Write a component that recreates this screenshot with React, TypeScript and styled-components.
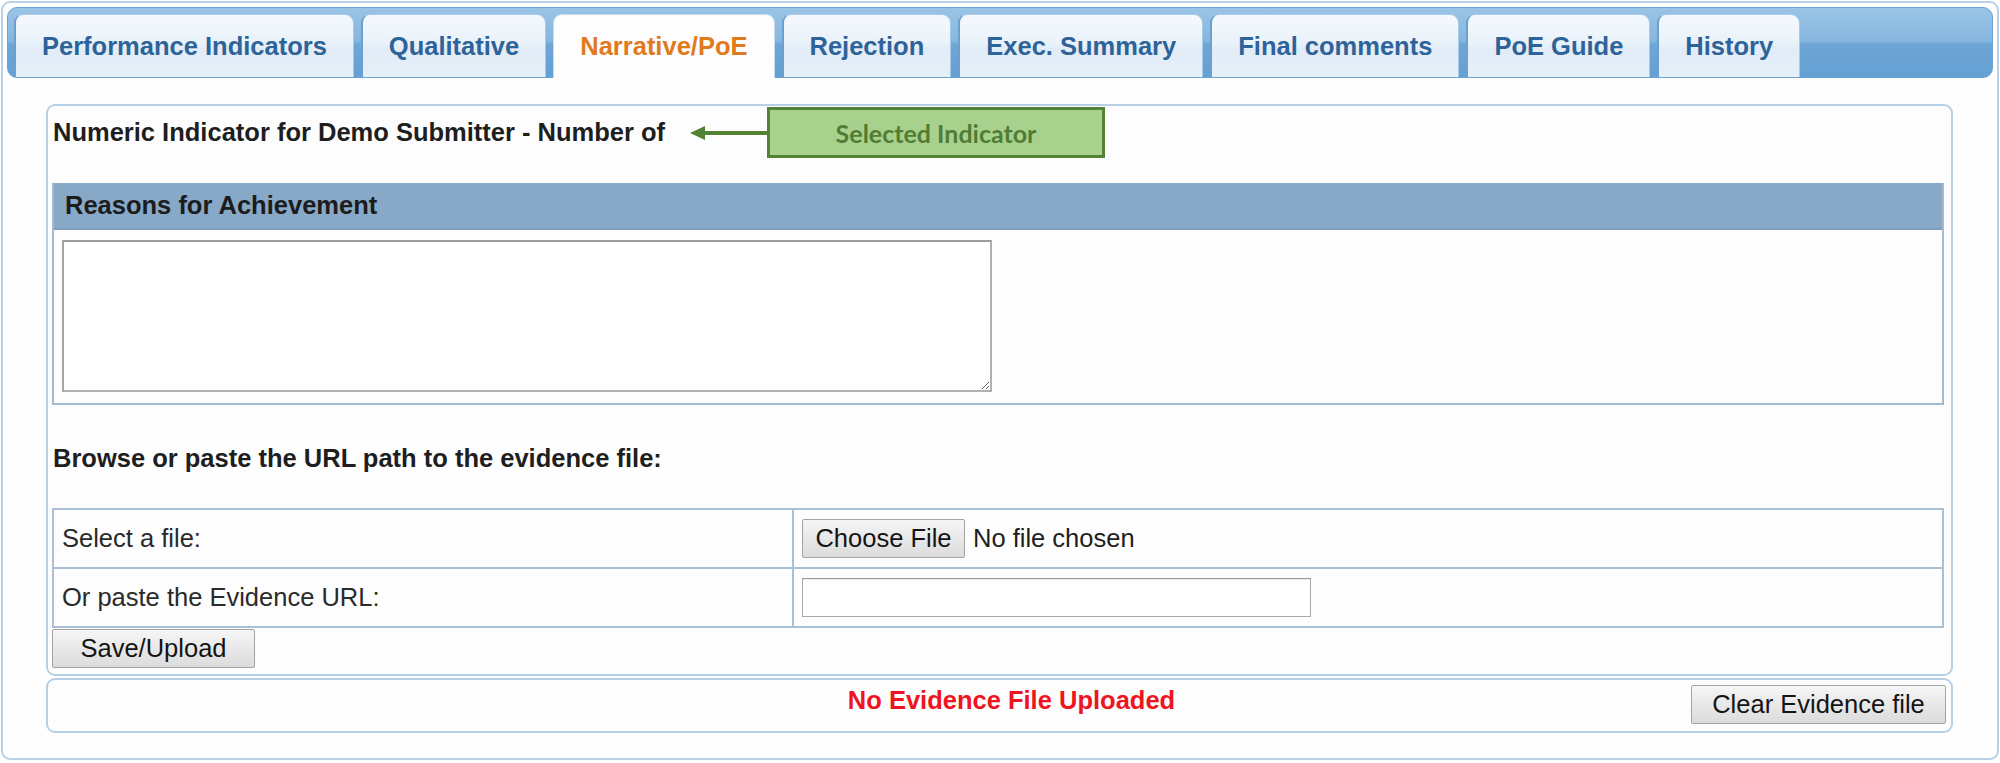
import React from "react";
import styled, { createGlobalStyle, css } from "styled-components";

const GlobalStyle = createGlobalStyle`
  html, body {
    margin: 0;
    padding: 0;
    background: #ffffff;
  }
  body {
    font-family: "Liberation Sans", Arial, sans-serif;
    font-size: 25.5px;
    color: #1e1e1e;
  }
  * {
    box-sizing: border-box;
  }
`;

const tabs = [
  "Performance Indicators",
  "Qualitative",
  "Narrative/PoE",
  "Rejection",
  "Exec. Summary",
  "Final comments",
  "PoE Guide",
  "History",
];

const Frame = styled.div`
  margin: 1px 0 0 1px;
  width: 1998px;
  height: 759px;
  border: 2px solid #b6d1e8;
  border-radius: 9px;
  padding: 4px;
  background: #fefefe;
`;

const TabBar = styled.ul`
  list-style: none;
  margin: 0;
  padding: 7px 6px 0 6px;
  height: 71px;
  display: flex;
  align-items: flex-end;
  gap: 7px;
  border: 1px solid #6da3d3;
  border-radius: 10px;
  background: linear-gradient(
    to bottom,
    #9ac4e6 0%,
    #86b6df 48%,
    #6ea6d6 52%,
    #64a0d3 100%
  );
`;

const Tab = styled.li<{ $active?: boolean }>`
  height: 63px;
  padding: 0 26px;
  display: flex;
  align-items: center;
  font-weight: bold;
  font-size: 25.5px;
  color: #2e6399;
  border: 1px solid #a9c9e6;
  border-bottom: none;
  border-left: 2px solid #6b9fcf;
  border-radius: 9px 9px 0 0;
  background: linear-gradient(
    to bottom,
    #f5f9fd 0%,
    #e9f2fa 45%,
    #e1ecf7 55%,
    #e6f0f9 100%
  );
  cursor: pointer;

  ${(p) =>
    p.$active &&
    css`
      height: 64px;
      margin-bottom: -1px;
      color: #e17a1d;
      border-color: #c9dcec;
      border-left: 1px solid #c9dcec;
      background: #fdfdfd;
    `}
`;

const Body = styled.div`
  padding: 26px 0 0 39px;
`;

const Panel = styled.div`
  width: 1907px;
  border: 2px solid #b7d0e6;
  border-radius: 9px;
  padding: 1px 7px 6px 4px;
  background: #fdfdfd;
`;

const IndicatorRow = styled.div`
  display: flex;
  align-items: center;
  height: 51px;
`;

const IndicatorTitle = styled.div`
  width: 638px;
  padding-left: 1px;
  font-weight: bold;
  white-space: nowrap;
  color: #1e1e1e;
`;

const Callout = styled.div`
  width: 338px;
  height: 51px;
  display: flex;
  align-items: center;
  justify-content: center;
  background: #a9d18e;
  border: 3px solid #548235;
  font-family: Lato, "Open Sans", sans-serif;
  font-weight: bold;
  font-size: 25px;
  color: #507d33;
`;

const Section = styled.div`
  margin-top: 25px;
  border: 2px solid #a3b9ce;
  border-top: none;
`;

const SectionHeader = styled.div`
  height: 47px;
  padding-left: 11px;
  display: flex;
  align-items: center;
  background: #88a8c8;
  border-bottom: 2px solid #7f9ebd;
  font-weight: bold;
  color: #1c1c1c;
`;

const SectionBody = styled.div`
  padding: 10px 8px 11px 8px;
  background: #fdfdfd;
`;

const TextArea = styled.textarea`
  display: block;
  width: 930px;
  height: 152px;
  border: 2px solid #b0b0b0;
  border-top-color: #9c9c9c;
  border-left-color: #a4a4a4;
  background: #ffffff;
  font-family: "Liberation Sans", Arial, sans-serif;
  font-size: 22px;
  resize: both;
`;

const Prompt = styled.div`
  margin: 38px 0 35px 1px;
  line-height: 30px;
  font-weight: bold;
  color: #1e1e1e;
`;

const FieldTable = styled.table`
  width: 1892px;
  border-collapse: collapse;
  border: 2px solid #a9c0d6;
`;

const Cell = styled.td<{ $label?: boolean }>`
  height: 59px;
  padding: 0 8px;
  border: 2px solid #a9c0d6;
  vertical-align: middle;
  color: #2a2a2a;
  ${(p) =>
    p.$label &&
    css`
      width: 740px;
      padding-left: 8px;
    `}
`;

const FilePicker = styled.div`
  display: flex;
  align-items: center;
  gap: 8px;
  color: #1e1e1e;
`;

const Button = styled.button<{ $w: number }>`
  width: ${(p) => p.$w}px;
  height: 39px;
  padding: 0;
  font-family: "Liberation Sans", Arial, sans-serif;
  font-size: 25.5px;
  color: #141414;
  background: linear-gradient(to bottom, #f6f6f6 0%, #e8e8e8 50%, #dcdcdc 100%);
  border: 1px solid #a3a3a3;
  border-radius: 2px;
  cursor: pointer;
`;

const UrlInput = styled.input`
  display: block;
  width: 509px;
  height: 39px;
  border: 1px solid #a9a9a9;
  border-top-color: #999;
  box-shadow: inset 0 1px 1px rgba(0, 0, 0, 0.08);
  background: #fff;
  font-family: "Liberation Sans", Arial, sans-serif;
  font-size: 22px;
`;

const SaveRow = styled.div`
  padding-top: 1px;
`;

const StatusBox = styled.div`
  margin-top: 2px;
  width: 1907px;
  height: 55px;
  border: 2px solid #b7d0e6;
  border-radius: 9px;
  padding: 5px 5px 0 5px;
  display: grid;
  grid-template-columns: 1fr auto 1fr;
  align-items: start;
  background: #fdfdfd;
`;

const StatusText = styled.div`
  grid-column: 2;
  padding: 1px 0 0 24px;
  font-weight: bold;
  color: #ee1420;
  white-space: nowrap;
`;

const StatusAction = styled.div`
  grid-column: 3;
  justify-self: end;
`;

const Arrow = () => (
  <svg width="77" height="16" viewBox="0 0 77 16">
    <line x1="12" y1="8" x2="77" y2="8" stroke="#548235" strokeWidth="4" />
    <polygon points="0,8 15,1 15,15" fill="#548235" />
  </svg>
);

export default function App() {
  return (
    <>
      <GlobalStyle />
      <Frame>
        <TabBar>
          {tabs.map((t) => (
            <Tab key={t} $active={t === "Narrative/PoE"}>
              {t}
            </Tab>
          ))}
        </TabBar>
        <Body>
          <Panel>
            <IndicatorRow>
              <IndicatorTitle>
                Numeric Indicator for Demo Submitter - Number of
              </IndicatorTitle>
              <Arrow />
              <Callout>Selected Indicator</Callout>
            </IndicatorRow>

            <Section>
              <SectionHeader>Reasons for Achievement</SectionHeader>
              <SectionBody>
                <TextArea />
              </SectionBody>
            </Section>

            <Prompt>Browse or paste the URL path to the evidence file:</Prompt>

            <FieldTable>
              <tbody>
                <tr>
                  <Cell $label>Select a file:</Cell>
                  <Cell>
                    <FilePicker>
                      <Button $w={163}>Choose File</Button>
                      <span>No file chosen</span>
                    </FilePicker>
                  </Cell>
                </tr>
                <tr>
                  <Cell $label>Or paste the Evidence URL:</Cell>
                  <Cell>
                    <UrlInput type="text" />
                  </Cell>
                </tr>
              </tbody>
            </FieldTable>

            <SaveRow>
              <Button $w={203}>Save/Upload</Button>
            </SaveRow>
          </Panel>

          <StatusBox>
            <StatusText>No Evidence File Uploaded</StatusText>
            <StatusAction>
              <Button $w={255}>Clear Evidence file</Button>
            </StatusAction>
          </StatusBox>
        </Body>
      </Frame>
    </>
  );
}
